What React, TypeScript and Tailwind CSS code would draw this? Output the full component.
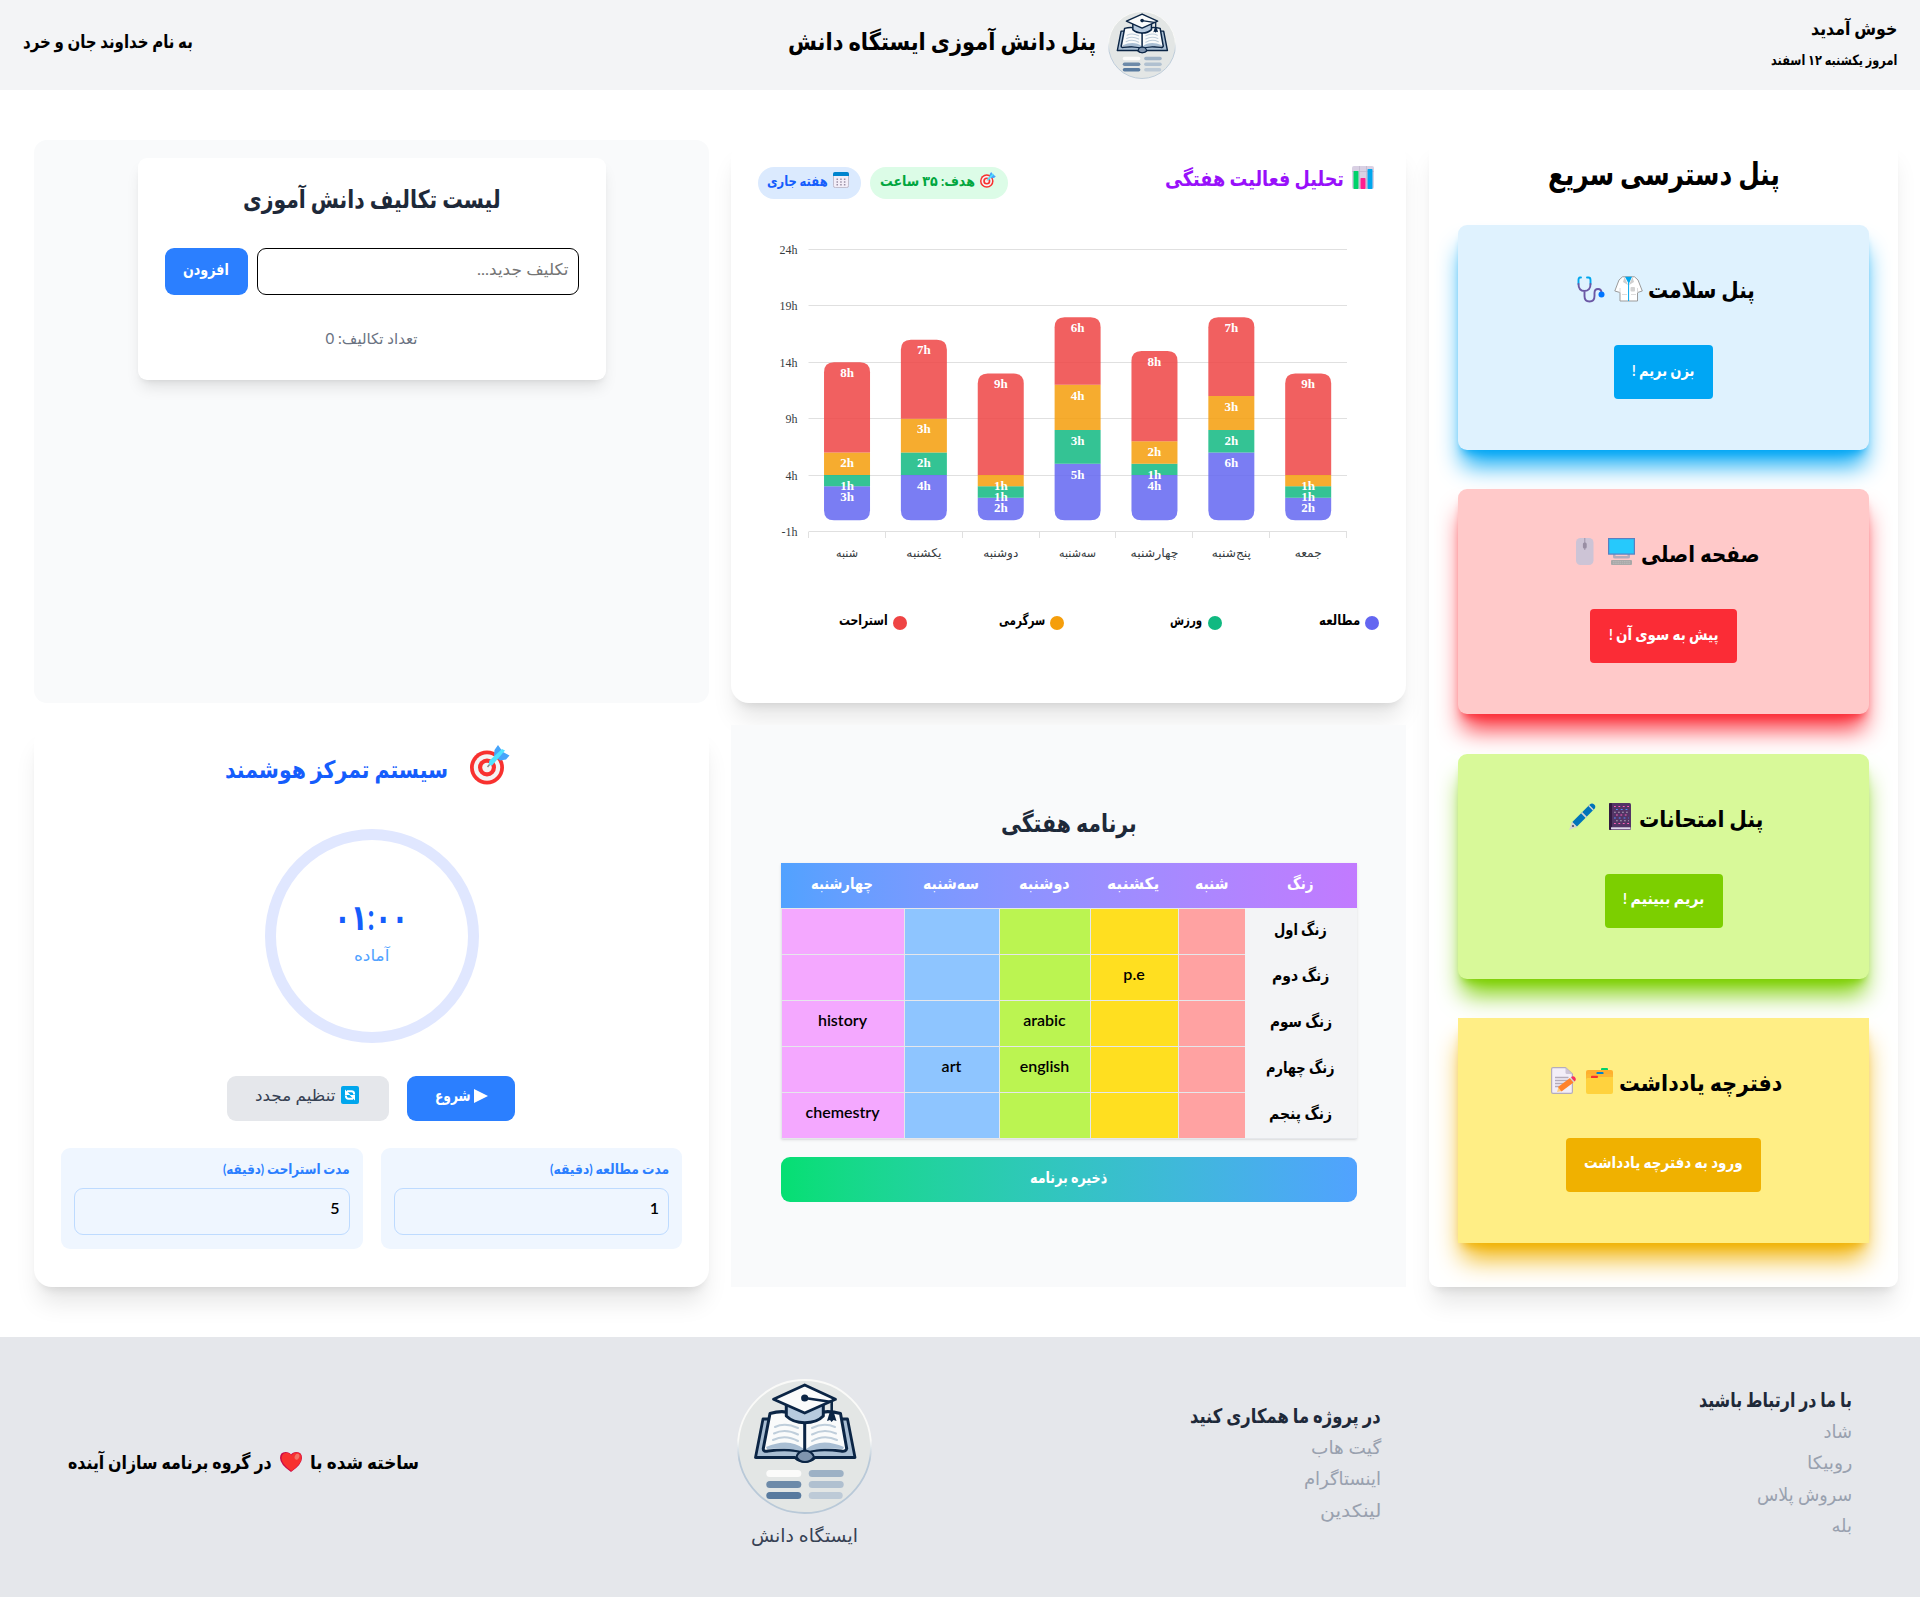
import { useLayoutEffect, useRef, useState } from "react";
import type { ReactNode } from "react";

/* A line of text condensed or stretched horizontally to a given width. */
function Fit({ w, className = "", children }: { w: number; className?: string; children: ReactNode }) {
  const ref = useRef<HTMLSpanElement>(null);
  const [scale, setScale] = useState(1);
  useLayoutEffect(() => {
    if (ref.current) setScale(w / ref.current.offsetWidth);
  }, [w]);
  return (
    <span className={"inline-flex justify-start shrink-0 " + className} style={{ width: w }}>
      <span ref={ref} className="shrink-0 whitespace-nowrap origin-right" style={{ transform: `scaleX(${scale})` }}>
        {children}
      </span>
    </span>
  );
}

function Logo({ className }: { className: string }) {
  const navy = "#0b2545";
  return (
    <svg className={className} viewBox="0 0 135 135" fill="none" strokeLinejoin="round" strokeLinecap="round">
      <defs>
        <linearGradient id="rim" x1="0" y1="0" x2="0" y2="1">
          <stop offset="0.45" stopColor="#fafaf8" />
          <stop offset="0.6" stopColor="#b9c9d8" />
        </linearGradient>
      </defs>
      <circle cx="67.5" cy="67.5" r="66.5" fill="#e3e6e5" stroke="url(#rim)" strokeWidth="1.8" />
      <path d="M26 40 L18.5 78.5 H58 Q62 82.5 68 82.5 Q74 82.5 78 78.5 H118 L110.5 40Z" fill="#a9bed3" stroke={navy} strokeWidth="2.8" />
      <path d="M33 34.5 Q55 28 67.7 44 Q80 28 103.5 34.5 L109.7 69.500 Q109 73 104 72 Q80 69 67.7 74 Q55 69 31 72 Q26 73 26.300 69.500Z" fill="#fafbfb" stroke={navy} strokeWidth="3" />
      <path d="M29 68 Q52 58 67 70 V73 Q54 68 30 70Z M107 68 Q84 58 69 70 V73 Q82 68 106 70Z" fill="#a9bed3" />
      <path d="M38 48 Q48 43 61 49 M37 54.500 Q48 49 61 55.500 M36 61 Q48 55 61 62 M75 49 Q87 43 98 48 M75 55.500 Q87 49 99 54.500 M75 62 Q87 55 100 61" stroke="#bfcedb" strokeWidth="2" />
      <path d="M67.700 44V74" stroke={navy} strokeWidth="3" />
      <path d="M59.500 78 Q61 72 68 71.500 Q75 72 77 78 Q73 83 68 83 Q63 83 59.500 78Z" fill="#7f94ae" stroke={navy} strokeWidth="2" />
      <path d="M49.300 25V37 Q56 43.700 67.700 43.700 Q80 43.700 86.300 37V25Z" fill="#b7cade" stroke={navy} strokeWidth="3" />
      <path d="M67.700 6 L98.500 20.300 L67.700 34 L36.500 20.300Z" fill="#fafbfb" stroke={navy} strokeWidth="2.800" />
      <path d="M67.700 19 L94.700 23V37" stroke={navy} strokeWidth="2.600" />
      <circle cx="67.700" cy="19" r="3.600" fill={navy} />
      <path d="M92.500 34h4.500l2.500 8-3-1-2 2-1.500-2-3 1z" fill={navy} />
      <rect x="29.300" y="91" width="35" height="7" rx="3.500" fill="#fbfbfa" />
      <rect x="71.700" y="91" width="35" height="7" rx="3.500" fill="#9db1c5" />
      <rect x="29.300" y="102" width="35" height="7" rx="3.500" fill="#6d8aa9" />
      <rect x="71.700" y="102" width="35" height="7" rx="3.500" fill="#b0c0d0" />
      <rect x="29.300" y="113" width="35" height="7" rx="3.500" fill="#587a9f" />
      <rect x="71.700" y="113" width="34" height="7" rx="3.500" fill="#bdcad7" />
    </svg>
  );
}

function Target({ className }: { className: string }) {
  return (
    <svg className={className} viewBox="0 0 40 40">
      <circle cx="17" cy="22.500" r="17" fill="#f8312f" />
      <circle cx="17" cy="22.500" r="13.200" fill="#f4f4f4" />
      <circle cx="17" cy="22.500" r="9" fill="#f8312f" />
      <circle cx="17" cy="22.500" r="4.800" fill="#f4f4f4" />
      <path d="M17.500 22l4-5" stroke="#8a8a8a" strokeWidth="1.500" />
      <path d="M24 11 L24.500 5 L28 0 L31.500 5 L33 7 L39.500 10.500 L36 14.500 L30 15.500Z" fill="#46a4fb" />
      <path d="M35 5.500L22 20.500Q17.500 21 19.500 15.500L32 4Z" fill="#50e2ff" />
    </svg>
  );
}

function Coat({ className }: { className: string }) {
  return (
    <svg className={className} viewBox="0 0 29 26">
      <path d="M8.500.800 H20.500 L24 4 L28.300 15 L23.500 16.500 V25 H6V16.500L.800 15 L5 4Z" fill="#fff" stroke="#9b9b9b" strokeWidth="1" />
      <path d="M11 .800h7L14.800 8Z" fill="#00a6ed" />
      <path d="M10.500 1L9 6l5 3zM18.500 1L20 6l-5 3z" fill="#cfcfcf" />
      <path d="M14.600 7V25" stroke="#00a6ed" strokeWidth="1" />
      <rect x="16.500" y="11" width="4.500" height="4.500" rx="1" fill="#d3d3d3" />
      <path d="M8 18.500h5M17 18.500h5M6 17v-5M23.500 17v-5" stroke="#d3d3d3" strokeWidth=".8" />
    </svg>
  );
}

function Stethoscope({ className }: { className: string }) {
  return (
    <svg className={className} viewBox="0 0 28 27" fill="none" strokeWidth="1.900" strokeLinecap="round">
      <path d="M4 1.500H3Q1.500 1.500 1.500 4V8M10 1.500H11.500Q13.500 1.500 13.500 4V8" stroke="#00a6ed" />
      <path d="M1.500 8Q1.500 15 7.500 15Q13.500 15 13.500 8M7.500 15V20Q7.500 25.500 12.500 25.500Q17.500 25.500 17.500 20V17Q17.500 13 21 13Q24.500 13 24.500 17" stroke="#6b58a5" />
      <circle cx="24.500" cy="18.500" r="3" fill="#0074ff" />
    </svg>
  );
}

function Monitor({ className }: { className: string }) {
  return (
    <svg className={className} viewBox="0 0 27 27">
      <path d="M5 16h17v3q0 1.500-2 1.500H7q-2 0-2-1.500z" fill="#b4acbc" />
      <path d="M7.500 16h12v2h-12z" fill="#ffc8c8" />
      <rect x=".6" y=".6" width="25.800" height="15.500" fill="#26c9fc" stroke="#5a7fc0" strokeWidth="1.200" />
      <rect x="3" y="22" width="21" height="5" rx="1" fill="#a8a8a8" />
      <path d="M5 23.700h17M5 25.300h17" stroke="#bebebe" strokeWidth=".8" strokeDasharray="1.500 .7" />
    </svg>
  );
}

function Mouse({ className }: { className: string }) {
  return (
    <svg className={className} viewBox="0 0 18 27">
      <rect width="17.500" height="27" rx="4.500" fill="#cdc4d6" />
      <path d="M8.800 0V12" stroke="#998ea4" strokeWidth=".9" />
      <rect x="6.900" y="4.500" width="3.800" height="6" rx="1.500" fill="#998ea4" />
    </svg>
  );
}

function Notebook({ className }: { className: string }) {
  return (
    <svg className={className} viewBox="0 0 22 27">
      <rect width="22" height="27" rx="1.500" fill="#533566" />
      <rect width="3" height="27" rx="1" fill="#321b41" />
      <path d="M2 24.300h19.500v2H2z" fill="#e1d8ec" />
      <g fill="none" strokeWidth="1.100">
        <path d="M5 3.500h15M7 12h13M5 20.500h15" stroke="#ff5fb8" strokeDasharray="1.800 2.600" />
        <path d="M7 6.500h13M5 15h15" stroke="#5092ff" strokeDasharray="1.800 3" />
        <path d="M5 9.200h15M7 17.800h13" stroke="#a9a0b5" strokeDasharray="1.800 2.200" />
      </g>
    </svg>
  );
}

function Pen({ className }: { className: string }) {
  return (
    <svg className={className} viewBox="0 0 27 27">
      <path d="M0 27L2.500 20.500 6.500 24.500z" fill="#d3d3d3" />
      <path d="M2.800 19.500L20.800 1.500Q23-.5 25.200 1.500T25.300 6L7.500 24Z" fill="#0074ba" />
      <path d="M3.200 18.700l5 5-1.500 1.300L2 20.500zM12 10.300l4.700 4.700 1.200-1.200-4.700-4.700zM19.300 3l4.500 4.500 1-1L20.300 2z" fill="#d3d3d3" />
      <circle cx="4" cy="23" r="1.100" fill="#4b4b68" />
    </svg>
  );
}

function Folder({ className }: { className: string }) {
  return (
    <svg className={className} viewBox="0 0 27 26">
      <rect x="15" y="0" width="7" height="5" rx="1" fill="#00d26a" />
      <path d="M0 4q0-2 2-2h23q2 0 2 2v9H0z" fill="#ffb02e" />
      <rect x="10.500" y="4" width="7" height="2.500" rx=".8" fill="#0084ce" />
      <path d="M0 8q0-2 2-2H25q2 0 2 2v5H0z" fill="#fcb833" />
      <rect x="5" y="7.800" width="7" height="3" rx=".8" fill="#f8312f" />
      <path d="M0 11.500q0-1.500 1.500-1.500H11l2-1H27V24q0 2-2 2H2q-2 0-2-2z" fill="#ffd23e" />
    </svg>
  );
}

function Memo({ className }: { className: string }) {
  return (
    <svg className={className} viewBox="0 0 26 27">
      <path d="M.6 2q0-1.400 1.400-1.400H14.500L21.400 7V25q0 1.400-1.400 1.400H2Q.6 26.400.6 25z" fill="#f3eef8" stroke="#b4acbc" strokeWidth="1.200" />
      <path d="M14.500.6V5.500Q14.500 7 16 7H21.400Z" fill="#cdc4d6" />
      <path d="M4 10.500h13.500M4 13.500h13.500M4 16.500h10M4 19.500h8" stroke="#b4acbc" strokeWidth="1.300" />
      <path d="M6 25l1.500-5 3.500 4z" fill="#ffce7c" />
      <path d="M7 20L19 11l3.500 4.500L10.500 24.500z" fill="#ff822d" />
      <path d="M19 11l1-.8 3.500 4.500-1 .8z" fill="#d3d3d3" />
      <path d="M20 10.200l1-.7q1.500-1 3 .8t.5 3.200l-1 1z" fill="#f8315f" />
    </svg>
  );
}

function BarsIcon({ className }: { className: string }) {
  return (
    <svg className={className} viewBox="0 0 22 23">
      <rect width="22" height="23" rx="2" fill="#d9d0e3" />
      <path d="M0 5.500h22M7.500 0v23M14.500 0v23" stroke="#bfb5cb" strokeWidth=".7" />
      <rect x="1.500" y="5" width="5" height="18" rx=".8" fill="#00d26a" />
      <rect x="8.500" y="12" width="5" height="11" rx=".8" fill="#ff1d8e" />
      <rect x="15.500" y="3" width="5" height="20" rx=".8" fill="#00a6ed" />
    </svg>
  );
}

function CalendarIcon({ className }: { className: string }) {
  return (
    <svg className={className} viewBox="0 0 16 16">
      <rect x=".4" y=".4" width="15.200" height="15.200" rx="2" fill="#f3eef8" stroke="#b4acbc" strokeWidth=".8" />
      <path d="M0 4V2q0-2 2-2h12q2 0 2 2v2z" fill="#0084ce" />
      <path d="M3.500 7.200h9M3.500 10h9M3.500 12.800h9" stroke="#998ea4" strokeWidth="1.500" strokeDasharray="1.500 2.200" />
    </svg>
  );
}

function RefreshIcon({ className }: { className: string }) {
  return (
    <svg className={className} viewBox="0 0 18 18">
      <rect width="18" height="18" rx="2" fill="#00a6ed" />
      <g fill="none" stroke="#fff" strokeWidth="1.900">
        <path d="M6 5.300h4.500Q13.200 5.300 13.200 8.500M12 12.700H7.500Q4.800 12.700 4.800 9.500" />
      </g>
      <path d="M4 3.500V9h5.500zM14 14.500V9H8.500z" fill="#fff" />
    </svg>
  );
}

function Heart({ className }: { className: string }) {
  return (
    <svg className={className} viewBox="0 0 22 20">
      <path d="M11 20Q0 12.500 0 6 0 0 5.500 0 9.500 0 11 2.500 12.500 0 16.500 0 22 0 22 6 22 12.500 11 20z" fill="#ca0b4a" />
      <path d="M11.500 19Q1.500 12 1.500 6 2 1 6.300.8 10 .8 11.500 3.500 13 .5 16.500.5 21.500.5 21.500 6 21.500 12 11.500 19z" fill="#f8312f" />
      <ellipse cx="17" cy="4.800" rx="2.200" ry="3" transform="rotate(25 17 4.800)" fill="#f37366" />
    </svg>
  );
}

const week = [
  { day: "شنبه", w: 22, h: [3, 1, 2, 8] },
  { day: "یکشنبه", w: 35, h: [4, 2, 3, 7] },
  { day: "دوشنبه", w: 35, h: [2, 1, 1, 9] },
  { day: "سه‌شنبه", w: 37, h: [5, 3, 4, 6] },
  { day: "چهارشنبه", w: 48, h: [4, 1, 2, 8] },
  { day: "پنج‌شنبه", w: 39, h: [6, 2, 3, 7] },
  { day: "جمعه", w: 27, h: [2, 1, 1, 9] },
];
const fills = ["#6366f1", "#10b981", "#f59e0b", "#ef4444"];
const UNIT = 11.28;
const ZERO = 520.2;

function Chart() {
  return (
    <svg className="block w-[621px] h-[350px]" viewBox="758 220 621 350" direction="ltr" fontFamily="'Liberation Serif','DejaVu Sans',serif">
      {[24, 19, 14, 9, 4, -1].map((v) => (
        <g key={v}>
          <path d={`M808.500 ${Math.floor(ZERO - v * UNIT) + 0.5}H1347`} stroke="#e0e0e0" />
          <text x="797.500" y={ZERO - v * UNIT + 4.5} fontSize="12" textAnchor="end" fill="#373d3f">{v + "h"}</text>
        </g>
      ))}
      {Array.from({ length: 8 }, (_, i) => (
        <path key={i} d={`M${Math.round(808 + i * 76.86) + 0.5} 532v6`} stroke="#e0e0e0" />
      ))}
      {week.map((d, i) => {
        const cx = 808.6 + 76.86 * (i + 0.5);
        const l = cx - 23;
        const r = cx + 23;
        let base = 0;
        const segs = d.h.map((n, k) => {
          const b = ZERO - base * UNIT;
          base += n;
          return { n, k, b, t: ZERO - base * UNIT };
        });
        return (
          <g key={d.day}>
            {segs.map(({ k, b, t }) => (
              <path
                key={k}
                fill={fills[k]}
                fillOpacity=".85"
                d={
                  k === 0
                    ? `M${l} ${t}H${r}V${b - 10}Q${r} ${b} ${r - 10} ${b}H${l + 10}Q${l} ${b} ${l} ${b - 10}Z`
                    : k === 3
                      ? `M${l} ${b}V${t + 10}Q${l} ${t} ${l + 10} ${t}H${r - 10}Q${r} ${t} ${r} ${t + 10}V${b}Z`
                      : `M${l} ${t}H${r}V${b}H${l}Z`
                }
              />
            ))}
            {segs.map(({ n, k, t }) => (
              <text key={k} x={cx} y={t + 14.7} fontSize="13" fontWeight="700" fill="#fff" textAnchor="middle">{n + "h"}</text>
            ))}
            <text x={cx} y="557" fontSize="12" fill="#373d3f" textAnchor="middle" textLength={d.w} lengthAdjust="spacingAndGlyphs">{d.day}</text>
          </g>
        );
      })}
    </svg>
  );
}

function QuickCard({ box, btn, title, tw, icons, label, lw, bw }: { box: string; btn: string; title: string; tw: number; icons: ReactNode; label: string; lw: number; bw: string }) {
  return (
    <div className={"flex h-[225px] w-[411px] flex-col items-center " + box}>
      <div className="mt-[44px] flex h-[40px] items-center text-[23px] leading-[40px] font-bold">
        <Fit w={tw}>{title}</Fit>
        {icons}
      </div>
      <div className={"mt-[36px] flex h-[54px] items-center justify-center rounded-[4px] pb-[5px] text-[16px] font-bold text-white " + btn + " " + bw}>
        <Fit w={lw}>{label}</Fit>
      </div>
    </div>
  );
}

const rows = [
  ["زنگ اول", 53, "", "", "", "", ""],
  ["زنگ دوم", 57, "", "p.e", "", "", ""],
  ["زنگ سوم", 62, "", "", "arabic", "", "history"],
  ["زنگ چهارم", 69, "", "", "english", "art", ""],
  ["زنگ پنجم", 63, "", "", "", "", "chemestry"],
] as const;
const cellColors = ["bg-[#ffa2a2]", "bg-[#ffdf20]", "bg-[#bbf451]", "bg-[#8ec5ff]", "bg-[#f4a8ff]"];
const heads: [string, number][] = [["زنگ", 27], ["شنبه", 34], ["یکشنبه", 52], ["دوشنبه", 51], ["سه‌شنبه", 56], ["چهارشنبه", 62]];
const gridCols = "grid grid-cols-[112px_67px_88px_91px_95px_123px]";

const legend: [string, number, string][] = [["مطالعه", 41, "bg-[#6366f1]"], ["ورزش", 32, "bg-[#10b981]"], ["سرگرمی", 46, "bg-[#f59e0b]"], ["استراحت", 49, "bg-[#ef4444]"]];

export default function App() {
  return (
    <div dir="rtl" className="h-[1597px] w-[1920px] overflow-hidden bg-white font-['Lato','DejaVu_Sans',sans-serif] text-black">
      <header className="flex h-[90px] items-center justify-between bg-gray-100 px-[23px] font-bold">
        <div className="flex flex-col pb-[2px]">
          <Fit w={86} className="text-[18px] leading-[32px]">خوش آمدید</Fit>
          <Fit w={126} className="text-[14px] leading-[32px]">امروز یکشنبه ۱۲ اسفند</Fit>
        </div>
        <div className="flex items-center gap-[11px]">
          <Logo className="h-[68px] w-[68px]" />
          <Fit w={308} className="pb-[8px] text-[24px]">پنل دانش آموزی ایستگاه دانش</Fit>
        </div>
        <Fit w={170} className="pb-[8px] text-[18px]">به نام خداوند جان و خرد</Fit>
      </header>

      <main className="flex h-[1247px] gap-[23px] pt-[50px] pr-[22px] pl-[34px]">
        <aside className="flex h-[1147px] w-[469px] flex-col items-center rounded-[9px] bg-white shadow-xl">
          <div className="flex h-[85px] items-center pb-[18px] text-[31px] font-bold"><Fit w={232}>پنل دسترسی سریع</Fit></div>
          <div className="flex flex-col gap-[39.300px]">
            <QuickCard
              box="rounded-[9px] bg-[#dff2fe] shadow-[0_20px_25px_-5px_#00a6f4,0_8px_10px_-6px_#00a6f4]"
              btn="bg-[#00a6f4]" bw="w-[99px]" title="پنل سلامت" tw={107} label="بزن بریم !" lw={62}
              icons={<><Coat className="mr-[5px] h-[26px] w-[29px]" /><Stethoscope className="mr-[9px] ml-[4px] h-[27px] w-[28px]" /></>}
            />
            <QuickCard
              box="rounded-[9px] bg-[#ffc9c9] shadow-[0_20px_25px_-5px_#fb2c36,0_8px_10px_-6px_#fb2c36]"
              btn="bg-[#fb2c36]" bw="w-[147px]" title="صفحه اصلی" tw={119} label="پیش به سوی آن !" lw={110}
              icons={<><Monitor className="mr-[6px] mb-[3px] h-[27px] w-[27px]" /><Mouse className="mr-[14px] mb-[3px] ml-[9px] h-[27px] w-[18px]" /></>}
            />
            <QuickCard
              box="rounded-[9px] bg-[#d8f999] shadow-[0_20px_25px_-5px_#7ccf00,0_8px_10px_-6px_#7ccf00]"
              btn="bg-[#7ccf00]" bw="w-[118px]" title="پنل امتحانات" tw={124} label="بریم ببینیم !" lw={81}
              icons={<><Notebook className="mr-[8px] mb-[3px] h-[27px] w-[22px]" /><Pen className="mr-[13px] mb-[3px] ml-[5px] h-[27px] w-[27px]" /></>}
            />
            <QuickCard
              box="bg-[#ffee85] shadow-[0_20px_25px_-5px_#f0b100,0_8px_10px_-6px_#f0b100]"
              btn="bg-[#f0b100]" bw="w-[195px]" title="دفترچه یادداشت" tw={163} label="ورود به دفترچه یادداشت" lw={159}
              icons={<><Folder className="mr-[6px] mb-[2px] h-[26px] w-[27px]" /><Memo className="mr-[9px] mb-[3px] ml-[6px] h-[27px] w-[26px]" /></>}
            />
          </div>
        </aside>

        <div className="grid grid-cols-[675px_675px] grid-rows-[563px_562px] gap-[22px]">
          <section className="rounded-[18px] bg-white px-[27px] pt-[26px] shadow-xl">
            <div className="flex h-[34px] items-center justify-between pr-[5px]">
              <div className="flex items-center gap-[8px] text-[#9810fa]">
                <BarsIcon className="mb-[11px] h-[23px] w-[22px]" />
                <Fit w={179} className="pb-[10px] text-[21px] font-bold">تحلیل فعالیت هفتگی</Fit>
              </div>
              <div className="flex gap-[9px] text-[14px] font-bold">
                <div className="flex h-[32px] w-[138px] items-center rounded-full bg-[#dcfce7] pr-[12px] text-[#00a63e]">
                  <Target className="mb-[6px] h-[16px] w-[16px]" />
                  <Fit w={95} className="mr-[5px] pb-[6px]">هدف: ۳۵ ساعت</Fit>
                </div>
                <div className="flex h-[32px] w-[103px] items-center rounded-full bg-[#dbeafe] pr-[12px] text-[#155dfc]">
                  <CalendarIcon className="mb-[6px] h-[16px] w-[16px]" />
                  <Fit w={61} className="mr-[5px] pb-[6px]">هفته جاری</Fit>
                </div>
              </div>
            </div>
            <div className="pt-[20px]"><Chart /></div>
            <div className="mt-[38px] flex">
              {legend.map(([t, w, c]) => (
                <div key={t} className="flex w-[157.500px] shrink-0 items-center gap-[5px] text-[14px] leading-[24px] font-bold">
                  <span className={"mt-[2px] h-[14px] w-[14px] rounded-full " + c} />
                  <Fit w={w} className="pb-1">{t}</Fit>
                </div>
              ))}
            </div>
          </section>

          <section className="flex flex-col items-center rounded-[13px] bg-gray-50 pt-[18px]">
            <div className="flex h-[222px] w-[468px] flex-col items-center rounded-[9px] bg-white px-[27px] shadow-lg">
              <Fit w={258} className="mt-[20px] text-[25px] leading-[40px] font-bold text-[#1e2939]">لیست تکالیف دانش آموزی</Fit>
              <div className="mt-[30px] flex w-full gap-[9px]">
                <div className="flex h-[47px] w-[322px] items-center rounded-[9px] border border-black px-[9px] pb-[6px] text-[16px] text-[#757575]"><Fit w={92}>تکلیف جدید...</Fit></div>
                <div className="flex h-[47px] w-[83px] items-center justify-center rounded-[9px] bg-[#2b7fff] pb-[6px] text-[16px] font-bold text-white"><Fit w={46}>افزودن</Fit></div>
              </div>
              <Fit w={92} className="mt-[31px] text-[15px] leading-[24px] text-[#6a7282]">تعداد تکالیف: 0</Fit>
            </div>
          </section>

          <section className="flex flex-col items-center bg-gray-50">
            <Fit w={136} className="mt-[77px] text-[25px] leading-[40px] font-bold text-[#1e2939]">برنامه هفتگی</Fit>
            <div className="mt-[21px] w-[576px] shadow-sm">
              <div className={gridCols + " h-[45px] items-center justify-items-center bg-linear-to-l from-[#c27aff] to-[#51a2ff] pb-[6px] text-[16px] font-bold text-white"}>
                {heads.map(([t, w]) => <Fit key={t} w={w}>{t}</Fit>)}
              </div>
              <div className="border-b border-gray-200">
                {rows.map(([t, w, ...cells]) => (
                  <div key={t} className={gridCols + " h-[46px] text-[16px]"}>
                    <div className="flex items-center justify-center bg-gray-100 pb-[5px] font-bold"><Fit w={w}>{t}</Fit></div>
                    {cells.map((c, i) => (
                      <div key={i} dir="ltr" className={"flex items-center justify-center border-t border-l border-gray-200 pb-[7px] font-semibold " + cellColors[i]}>{c}</div>
                    ))}
                  </div>
                ))}
              </div>
            </div>
            <div className="mt-[18px] flex h-[45px] w-[576px] items-center justify-center rounded-[9px] bg-linear-to-r from-[#05df72] to-[#51a2ff] pb-[6px] text-[16px] font-bold text-white"><Fit w={77}>ذخیره برنامه</Fit></div>
          </section>

          <section className="flex flex-col items-center rounded-[18px] bg-white shadow-xl">
            <div className="mt-[20px] flex h-[40px] w-[277px] items-start gap-[22px]">
              <Target className="h-[40px] w-[40px] shrink-0" />
              <Fit w={223} className="mt-[4px] text-[24px] leading-[40px] font-bold text-[#155dfc]">سیستم تمرکز هوشمند</Fit>
            </div>
            <div className="mt-[44px] flex h-[214px] w-[214px] flex-col items-center rounded-full border-[11px] border-[#e0e7ff] pt-[54px]">
              <Fit w={74} className="text-[36px] leading-[44px] font-bold text-[#155dfc]">۰۱:۰۰</Fit>
              <Fit w={35} className="mt-[2px] text-[16px] leading-[30px] text-[#51a2ff]">آماده</Fit>
            </div>
            <div className="mt-[33px] flex w-[287px] gap-[18px]">
              <div className="flex h-[45px] w-[108px] shrink-0 items-center justify-center gap-[3px] rounded-[9px] bg-[#2b7fff] pb-[7px] text-[16px] font-bold text-white">
                <svg className="mt-[1px] h-[14px] w-[14px]" viewBox="0 0 14 14"><path d="M0 0L14 7 0 14z" fill="#fff" /></svg>
                <Fit w={36}>شروع</Fit>
              </div>
              <div className="flex h-[45px] w-[162px] shrink-0 items-center justify-center gap-[6px] rounded-[9px] bg-gray-200 pr-[2px] pb-[7px] text-[16px] text-[#364153]">
                <RefreshIcon className="h-[18px] w-[18px]" />
                <Fit w={80}>تنظیم مجدد</Fit>
              </div>
            </div>
            <div className="mt-[27px] flex gap-[18px]">
              {([["مدت مطالعه (دقیقه)", 119, "1"], ["مدت استراحت (دقیقه)", 127, "5"]] as [string, number, string][]).map(([t, w, v]) => (
                <div key={t} className="flex h-[101px] w-[301.500px] flex-col rounded-[9px] bg-[#eff6ff] px-[13px] pt-[9px]">
                  <Fit w={w} className="text-[14px] leading-[24px] font-bold text-[#2b7fff]">{t}</Fit>
                  <div className="mt-[7px] flex h-[47px] items-center rounded-[9px] border border-[#bedbff] px-[9px] pb-[8px] text-[16px] font-semibold">{v}</div>
                </div>
              ))}
            </div>
          </section>
        </div>
      </main>

      <footer className="flex h-[260px] items-center justify-between bg-gray-200 px-[68px] pb-[8px]">
        <div className="flex w-[153px] flex-col text-[18px] leading-[31.500px] text-[#99a1af]">
          <Fit w={153} className="text-[20px] font-bold text-[#1e2939]">با ما در ارتباط باشید</Fit>
          <Fit w={29}>شاد</Fit>
          <Fit w={45}>روبیکا</Fit>
          <Fit w={95}>سروش پلاس</Fit>
          <Fit w={21}>بله</Fit>
        </div>
        <div className="flex w-[191px] flex-col text-[18px] leading-[31.500px] text-[#99a1af]">
          <Fit w={191} className="text-[20px] font-bold text-[#1e2939]">در پروژه ما همکاری کنید</Fit>
          <Fit w={70}>گیت هاب</Fit>
          <Fit w={77}>اینستاگرام</Fit>
          <Fit w={61}>لینکدین</Fit>
        </div>
        <div className="flex w-[135px] flex-col items-center pt-[3px]">
          <Logo className="h-[135px] w-[135px]" />
          <Fit w={107} className="mt-[5px] text-[18px] leading-[32px] text-[#364153]">ایستگاه دانش</Fit>
        </div>
        <div className="flex w-[351px] items-center gap-[8px] pb-[2px] text-[19px] font-bold">
          <Fit w={109}>ساخته شده با</Fit>
          <Heart className="h-[20px] w-[22px]" />
          <Fit w={204}>در گروه برنامه سازان آینده</Fit>
        </div>
      </footer>
    </div>
  );
}
